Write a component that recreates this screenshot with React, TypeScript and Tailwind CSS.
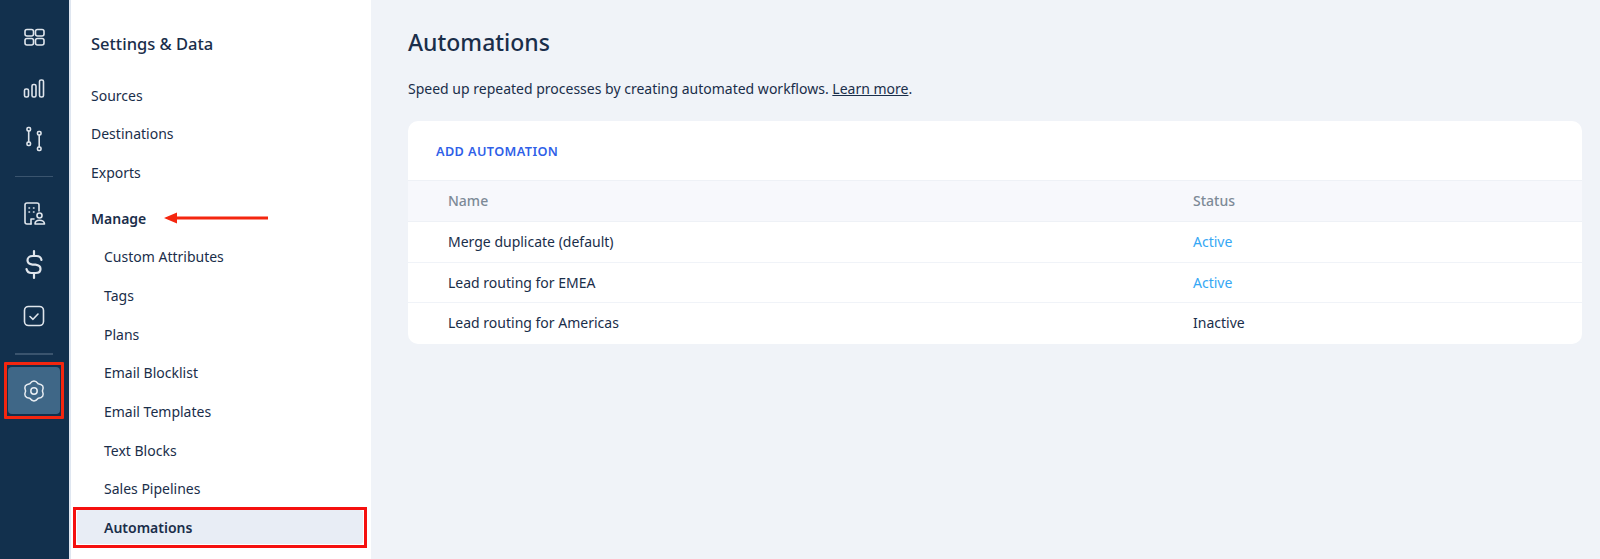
const FONT = "font-['Noto_Sans',sans-serif]";

const TOP_LINKS = ["Sources", "Destinations", "Exports"];
const MANAGE_LINKS = [
  "Custom Attributes",
  "Tags",
  "Plans",
  "Email Blocklist",
  "Email Templates",
  "Text Blocks",
  "Sales Pipelines",
];
const ROWS = [
  { name: "Merge duplicate (default)", status: "Active" },
  { name: "Lead routing for EMEA", status: "Active" },
  { name: "Lead routing for Americas", status: "Inactive" },
];

// six scalloped lobes, valley to valley
function gearPath() {
  const at = (r: number, deg: number) => {
    const a = (deg * Math.PI) / 180;
    return `${(12 + r * Math.cos(a)).toFixed(2)} ${(12 + r * Math.sin(a)).toFixed(2)}`;
  };
  let d = `M${at(8.4, -120)}`;
  for (let k = 0; k < 6; k++) {
    const peak = -90 + k * 60;
    d += `Q${at(12.8, peak)} ${at(8.4, peak + 30)}`;
  }
  return d + "Z";
}

function RailIcon({ children }: { children: React.ReactNode }) {
  return (
    <div className="flex h-[51px] items-center justify-center pr-[2px]">
      <svg width="26" height="36" viewBox="0 0 26 36" fill="none" stroke="#dfe5ec" strokeWidth="1.6" strokeLinecap="round" strokeLinejoin="round">
        {children}
      </svg>
    </div>
  );
}

function RailDivider({ className }: { className: string }) {
  return <div className={`mx-[15px] w-[38px] bg-[#3a546e] ${className}`} />;
}

export default function App() {
  return (
    <div className={`flex h-[559px] w-[1600px] overflow-hidden bg-[#f0f3f8] text-[#1a2e4a] ${FONT}`}>
      {/* icon rail */}
      <div className="w-[69px] shrink-0 bg-[#12304d] pt-[12px]">
        <RailIcon>
          <rect x="4" y="9.500" width="8.500" height="6.500" rx="2" />
          <rect x="14.500" y="9.500" width="8.500" height="6.500" rx="2" />
          <rect x="4" y="18.500" width="8.500" height="6.500" rx="2" />
          <rect x="14.500" y="18.500" width="8.500" height="6.500" rx="2" />
        </RailIcon>
        <RailIcon>
          <rect x="3.500" y="18" width="4" height="8" rx="1.600" />
          <rect x="11" y="13.500" width="4" height="12.500" rx="1.600" />
          <rect x="18.500" y="9" width="4" height="17" rx="1.600" />
        </RailIcon>
        <RailIcon>
          <rect x="6" y="5.500" width="3.500" height="3.500" rx="1.200" />
          <path d="M7.700 9v11" />
          <rect x="6" y="20" width="3.500" height="3.500" rx="1.200" />
          <rect x="16.500" y="9.500" width="3.500" height="3.500" rx="1.200" />
          <path d="M18.200 13v12" />
          <rect x="16.500" y="25" width="3.500" height="3.500" rx="1.200" />
        </RailIcon>
        <RailDivider className="mt-[11px] h-px" />
        <div className="h-[11px]" />
        <RailIcon>
          <path d="M10 28H6a2 2 0 0 1-2-2V9a2 2 0 0 1 2-2h10a2 2 0 0 1 2 2v6" />
          <path d="M10 28v-5h3" />
          <path d="M8 12h.5M12.500 12h.5M8 16h.5M12.500 16h.5" />
          <circle cx="18.500" cy="19.500" r="2.500" />
          <path d="M14 28c0-2.400 2-3.800 4.500-3.800S23.500 25.600 23.500 28z" />
        </RailIcon>
        <RailIcon>
          <path d="M20.500 13c-.5-2.500-2.500-4-5-4h-4c-3 0-5 1.800-5 4.300s2 4 5 4.300h3c3 .4 5 1.800 5 4.300s-2 4.100-5 4.100h-4c-2.500 0-4.500-1.500-5-4" strokeWidth="2.200" />
          <path d="M13 4v5M13 26v5" strokeWidth="2.200" />
        </RailIcon>
        <RailIcon>
          <rect x="3.500" y="8.500" width="19" height="19" rx="4" />
          <path d="M9 18.500l3 2.800 5-5.300" />
        </RailIcon>
        <RailDivider className="mt-[12px] h-[2px]" />
        <div className="relative ml-[8px] mt-[12px] flex h-[47px] w-[52px] items-center justify-center rounded-[4px] bg-[#3f6787]">
          <svg width="24" height="24" viewBox="0 0 24 24" fill="none" stroke="#e8edf2" strokeWidth="1.500" strokeLinejoin="round">
            <path d={gearPath()} />
            <circle cx="12" cy="12" r="3.200" />
          </svg>
          <div className="absolute -left-[4px] -top-[5px] h-[57px] w-[60px] rounded-[1px] border-[3px] border-[#f4260f]" />
        </div>
      </div>

      {/* settings sidebar */}
      <div className="h-full w-[302px] shrink-0 border-l-2 border-[#dfe6f0] bg-white pt-[32px]">
        <h2 className="ml-[20px] h-[24px] text-[16.500px] leading-[24px] font-medium">Settings &amp; Data</h2>
        <div className="mt-[20px]">
          {TOP_LINKS.map((label) => (
            <div key={label} className="flex h-[38.500px] items-center pl-[20px] text-[14px]">
              {label}
            </div>
          ))}
        </div>
        <div className="mt-[7px] flex h-[39px] items-center pl-[20px] text-[14px] font-semibold">
          Manage
          <svg className="ml-[18px]" width="104" height="12" viewBox="0 0 104 12">
            <path d="M0 6l13-5.500v4h91v3H13v4z" fill="#f4260f" />
          </svg>
        </div>
        {MANAGE_LINKS.map((label) => (
          <div key={label} className="flex h-[38.700px] items-center pl-[33px] text-[14px]">
            {label}
          </div>
        ))}
        <div className="relative ml-[6px] mt-[2px] flex h-[34px] w-[286px] items-center rounded-[3px] bg-[#e8edf5] pl-[27px] text-[14px] font-semibold">
          Automations
          <div className="absolute -left-[4px] -top-[3px] h-[41px] w-[294px] border-[3px] border-[#f5100f]" />
        </div>
      </div>

      {/* main */}
      <div className="min-w-0 flex-1 pl-[37px] pr-[18px] pt-[26px]">
        <h1 className="text-[23px] leading-[32px] font-medium">Automations</h1>
        <p className="mt-[21px] h-[20px] text-[14px] leading-[20px]">
          Speed up repeated processes by creating automated workflows. <span className="underline">Learn more</span>.
        </p>
        <div className="mt-[22px] overflow-hidden rounded-[10px] bg-white">
          <div className="flex h-[59px] items-center pl-[28px] pt-[2px] text-[12.700px] font-semibold tracking-[0.4px] text-[#2f5fe8]">
            ADD AUTOMATION
          </div>
          <div className="flex h-[42px] items-center border-y border-[#eef1f6] bg-[#f7f8fc] pb-[1px] pl-[40px] text-[14px] font-medium text-[#7d8a97]">
            <div className="w-[745px]">Name</div>
            <div>Status</div>
          </div>
          {ROWS.map((row, i) => (
            <div key={row.name} className={`flex h-[40.500px] items-center pl-[40px] text-[14px] ${i < 2 ? "border-b border-[#f0f3f8]" : "pb-[1px]"}`}>
              <div className="w-[745px]">{row.name}</div>
              <div className={row.status === "Active" ? "text-[#35a7f5]" : "text-[#1a2e4a]"}>{row.status}</div>
            </div>
          ))}
        </div>
      </div>
    </div>
  );
}
